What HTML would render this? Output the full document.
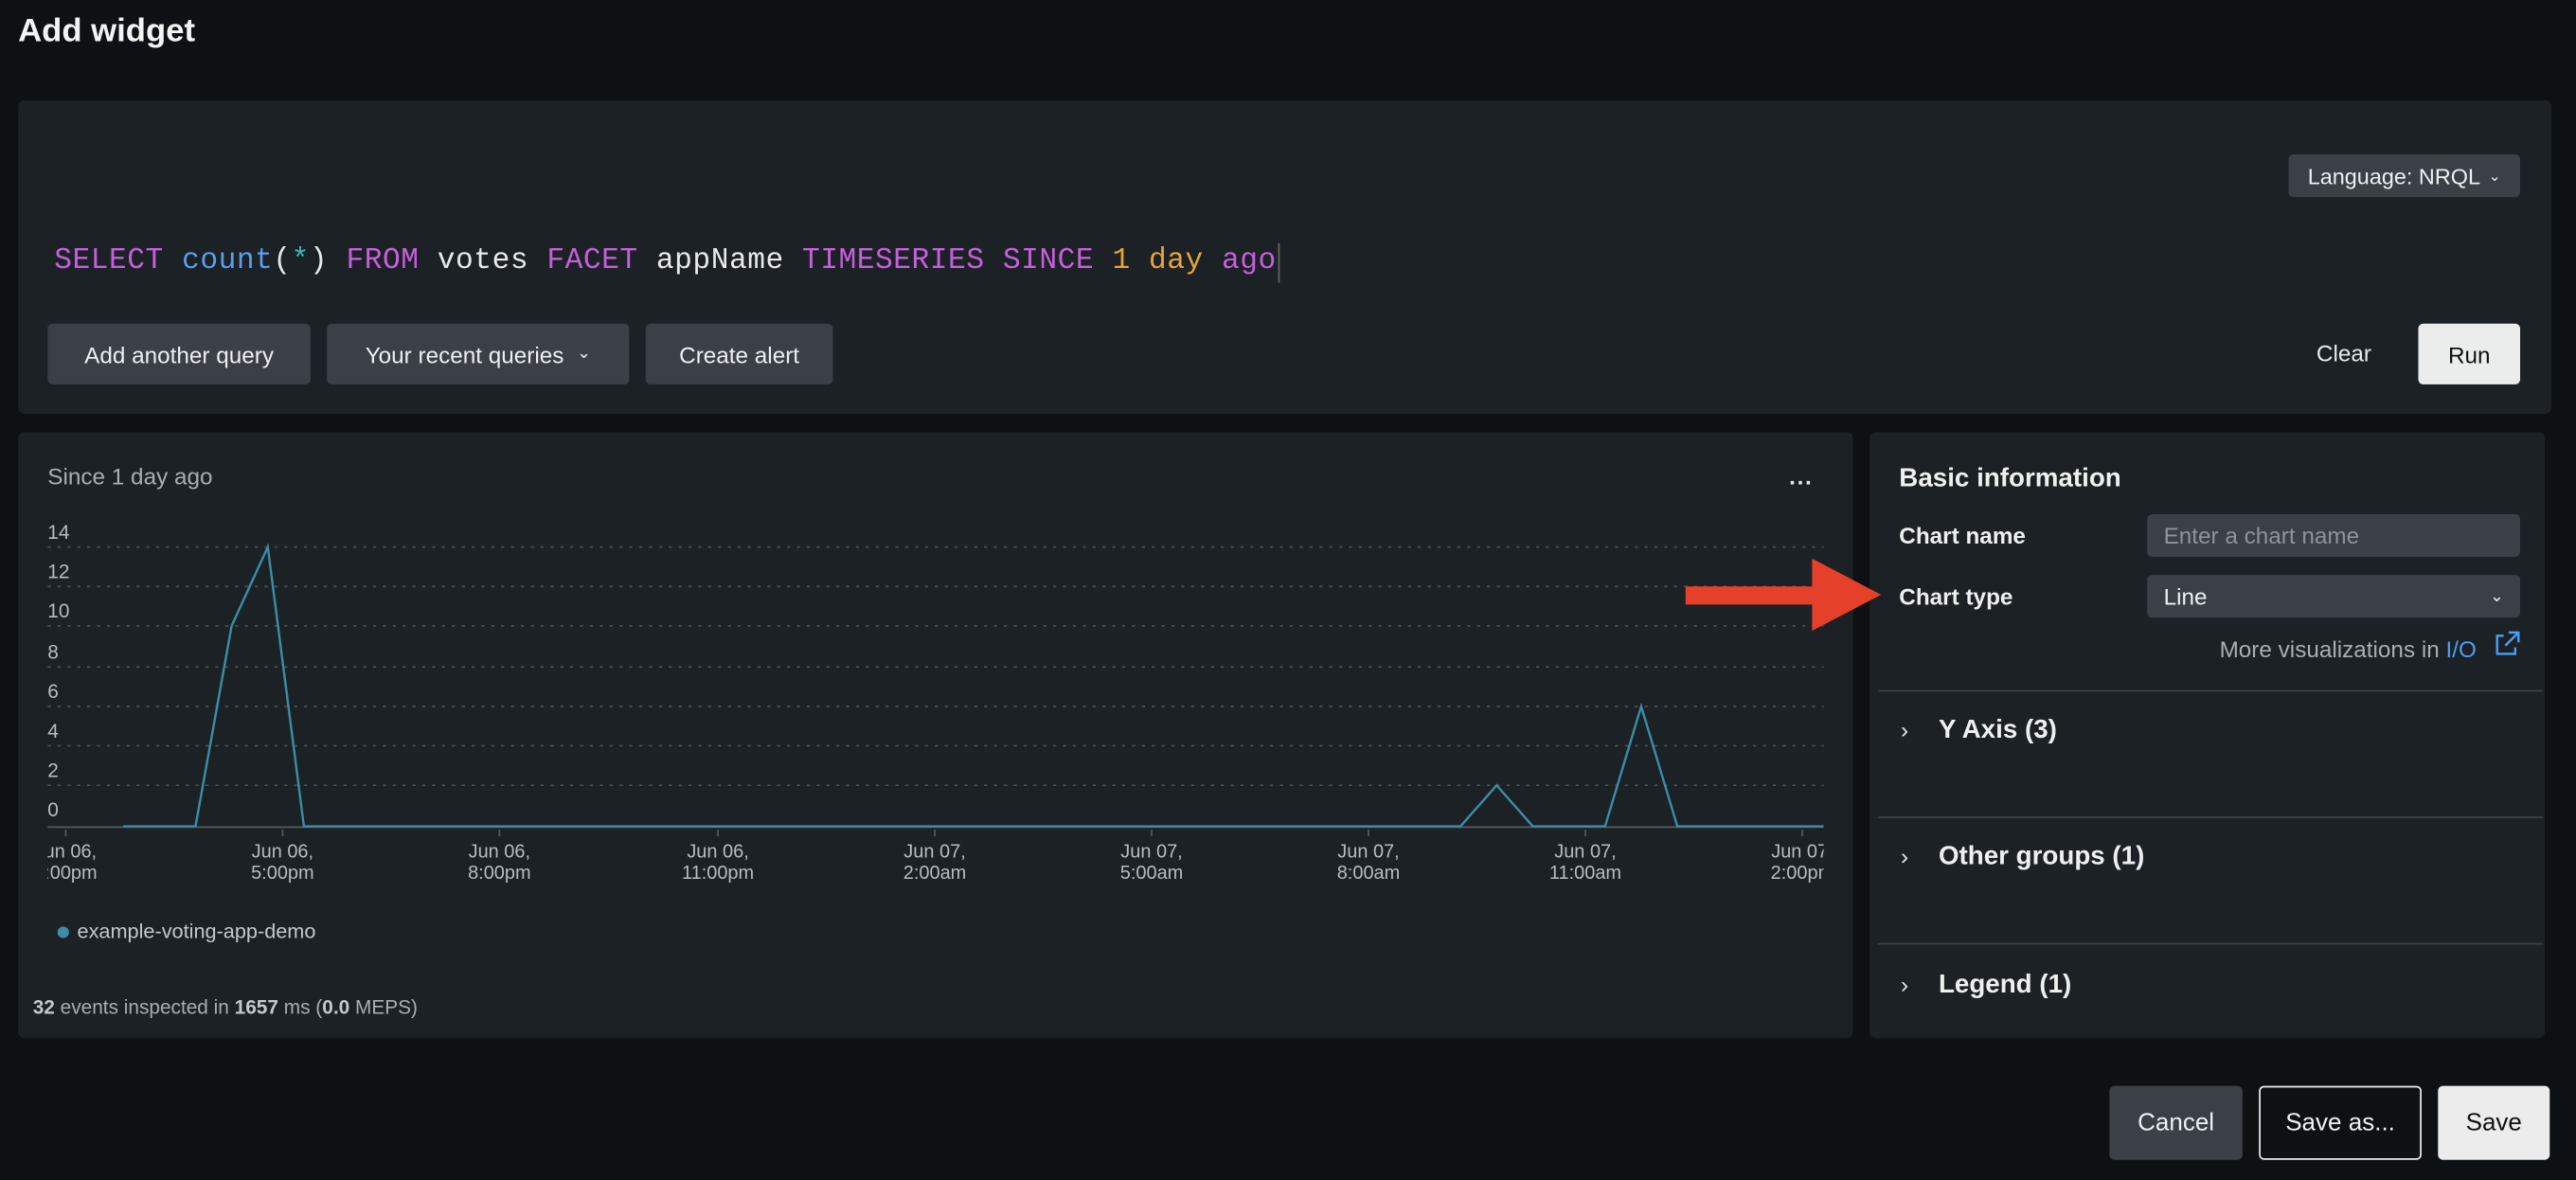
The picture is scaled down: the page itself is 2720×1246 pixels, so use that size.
<!DOCTYPE html>
<html><head><meta charset="utf-8"><style>
html,body{margin:0;padding:0;background:#0e1113;width:2720px;height:1246px;overflow:hidden}
#w{position:absolute;left:0;top:0;width:1568px;height:718px;transform:scale(1.734694);transform-origin:0 0;font-family:"Liberation Sans",sans-serif;color:#e8eaea}
.a{position:absolute}
.p{position:absolute;background:#1b2125;border-radius:4px}
.b{position:absolute;background:#3a4046;border-radius:3px;font-size:14px;color:#eef0f0;display:flex;align-items:center;justify-content:center}
.mono{font-family:"Liberation Mono",monospace;font-size:18px;white-space:pre;letter-spacing:0.3px}
.k{color:#c65fdb}.f{color:#5a9ee8}.o{color:#e8a33a}
.h{font-weight:bold;font-size:16px;color:#eef0f0}
.l{font-weight:bold;font-size:14px;color:#eef0f0}
.sep{position:absolute;left:1143px;width:405px;height:1px;background:#3a4046}
.yl{position:absolute;left:29px;font-size:12px;color:#b8bcbe}
.xl{position:absolute;font-size:11.5px;color:#b8bcbe;text-align:center;width:80px;line-height:13px}
</style></head><body><div id="w">
<div class="a" style="left:11px;top:8px;font-size:20px;font-weight:bold;color:#f2f4f4">Add widget</div>

<div class="p" style="left:11px;top:61px;width:1542px;height:191px"></div>
<div class="b" style="left:1393px;top:94px;width:141px;height:26px;font-size:13.5px">Language: NRQL <span style="font-size:9px;margin-left:5px">&#8964;</span></div>
<div class="a mono" style="left:33px;top:149px"><span class="k">SELECT</span> <span class="f">count</span>(<span style="color:#3fb6b8">*</span>) <span class="k">FROM</span> votes <span class="k">FACET</span> appName <span class="k">TIMESERIES</span> <span class="k">SINCE</span> <span class="o">1 day</span> <span class="k">ago</span></div>
<div class="a" style="left:778px;top:148px;width:1px;height:24px;background:#666"></div>
<div class="b" style="left:29px;top:197px;width:160px;height:37px">Add another query</div>
<div class="b" style="left:199px;top:197px;width:184px;height:37px">Your recent queries <span style="font-size:10px;margin-left:8px">&#8964;</span></div>
<div class="b" style="left:393px;top:197px;width:114px;height:37px">Create alert</div>
<div class="a" style="left:1410px;top:207px;font-size:14px">Clear</div>
<div class="b" style="left:1472px;top:197px;width:62px;height:37px;background:#ebeded;color:#111">Run</div>

<div class="p" style="left:11px;top:263px;width:1117px;height:369px"></div>
<div class="a" style="left:29px;top:282px;font-size:14px;color:#a9aeb1">Since 1 day ago</div>
<div class="a" style="left:1089px;top:282px;font-size:14px;font-weight:bold;letter-spacing:1px">...</div>
<div class="yl" style="top:317px">14</div><div class="yl" style="top:341px">12</div><div class="yl" style="top:365px">10</div><div class="yl" style="top:390px">8</div><div class="yl" style="top:414px">6</div><div class="yl" style="top:438px">4</div><div class="yl" style="top:462px">2</div><div class="yl" style="top:486px">0</div>
<svg class="a" style="left:0;top:0" width="1130" height="520">
<g stroke="#4a5054" stroke-dasharray="2,4" stroke-width="1">
<line x1="29" x2="1110" y1="333" y2="333"/><line x1="29" x2="1110" y1="357" y2="357"/><line x1="29" x2="1110" y1="381" y2="381"/><line x1="29" x2="1110" y1="406" y2="406"/><line x1="29" x2="1110" y1="430" y2="430"/><line x1="29" x2="1110" y1="454" y2="454"/><line x1="29" x2="1110" y1="478" y2="478"/></g>
<line x1="29" x2="1110" y1="503.5" y2="503.5" stroke="#555a5e"/>
<g stroke="#555a5e"><line x1="40" x2="40" y1="505" y2="509"/><line x1="172" x2="172" y1="505" y2="509"/><line x1="304" x2="304" y1="505" y2="509"/><line x1="437" x2="437" y1="505" y2="509"/><line x1="569" x2="569" y1="505" y2="509"/><line x1="701" x2="701" y1="505" y2="509"/><line x1="833" x2="833" y1="505" y2="509"/><line x1="965" x2="965" y1="505" y2="509"/><line x1="1097" x2="1097" y1="505" y2="509"/></g>
<polyline fill="none" stroke="#3d8ca6" stroke-width="1.4" points="75,503 119,503 141,381 163,333 185,503 889,503 911,478 933,503 977,503 999,430 1021,503 1110,503"/>
</svg>
<div class="a" style="left:29px;top:510px;width:1081px;height:30px;overflow:hidden">
<div class="xl" style="left:-29px;top:3px">Jun 06,<br>2:00pm</div>
<div class="xl" style="left:103px;top:3px">Jun 06,<br>5:00pm</div>
<div class="xl" style="left:235px;top:3px">Jun 06,<br>8:00pm</div>
<div class="xl" style="left:368px;top:3px">Jun 06,<br>11:00pm</div>
<div class="xl" style="left:500px;top:3px">Jun 07,<br>2:00am</div>
<div class="xl" style="left:632px;top:3px">Jun 07,<br>5:00am</div>
<div class="xl" style="left:764px;top:3px">Jun 07,<br>8:00am</div>
<div class="xl" style="left:896px;top:3px">Jun 07,<br>11:00am</div>
<div class="xl" style="left:1028px;top:3px">Jun 07,<br>2:00pm</div>
</div>
<div class="a" style="left:35px;top:564px;width:7px;height:7px;border-radius:50%;background:#3d8ca6"></div>
<div class="a" style="left:47px;top:560px;font-size:12.5px;color:#c4c8ca">example-voting-app-demo</div>
<div class="a" style="left:20px;top:606px;font-size:12px;color:#a9aeb1"><b style="color:#c4c8ca">32</b> events inspected in <b style="color:#c4c8ca">1657</b> ms (<b style="color:#c4c8ca">0.0</b> MEPS)</div>

<div class="p" style="left:1138px;top:263px;width:411px;height:369px"></div>
<div class="a h" style="left:1156px;top:283px">Basic information</div>
<div class="a l" style="left:1156px;top:318px">Chart name</div>
<div class="b" style="left:1307px;top:313px;width:227px;height:26px;justify-content:flex-start;padding-left:10px;box-sizing:border-box;color:#8d9397">Enter a chart name</div>
<div class="a l" style="left:1156px;top:355px">Chart type</div>
<div class="b" style="left:1307px;top:350px;width:227px;height:26px;justify-content:space-between;padding:0 10px;box-sizing:border-box">Line<span style="font-size:10px">&#8964;</span></div>
<div class="a" style="left:1351px;top:387px;font-size:14px;color:#a9aeb1">More visualizations in <span style="color:#4a9ff5">I/O</span></div>
<svg class="a" style="left:1518px;top:384px" width="16" height="16" fill="none" stroke="#4a9ff5" stroke-width="1.4"><path d="M6 3H2v11h11v-4M9 1h6v6M15 1L7 9"/></svg>
<div class="sep" style="top:420px"></div><div class="sep" style="top:497px"></div><div class="sep" style="top:574px"></div>
<div class="a" style="left:1157px;top:436px;font-size:14px">&#8250;</div><div class="a h" style="left:1180px;top:436px">Y Axis (3)</div>
<div class="a" style="left:1157px;top:513px;font-size:14px">&#8250;</div><div class="a h" style="left:1180px;top:513px">Other groups (1)</div>
<div class="a" style="left:1157px;top:591px;font-size:14px">&#8250;</div><div class="a h" style="left:1180px;top:591px">Legend (1)</div>

<svg class="a" style="left:1020px;top:335px" width="130" height="55"><path d="M6 22H83V5L125 27L83 49V33H6Z" fill="#e5402a"/></svg>

<div class="b" style="left:1284px;top:661px;width:81px;height:45px;font-size:15px">Cancel</div>
<div class="b" style="left:1375px;top:661px;width:99px;height:45px;font-size:15px;background:#0e1113;border:1.5px solid #eee;box-sizing:border-box">Save as...</div>
<div class="b" style="left:1484px;top:661px;width:68px;height:45px;font-size:15px;background:#ececec;color:#111">Save</div>
</div></body></html>
